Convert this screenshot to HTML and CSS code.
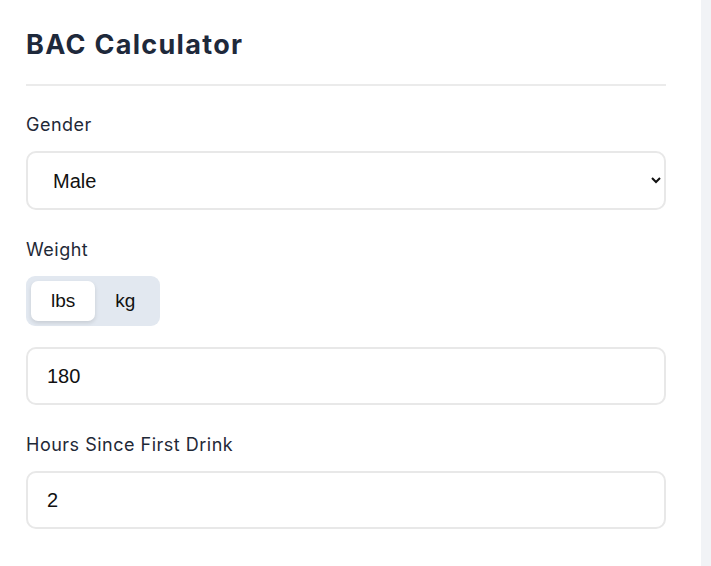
FILE: index.html
```html
<!DOCTYPE html>
<html lang="en">
<head>
    <meta charset="UTF-8">
    <meta name="viewport" content="width=device-width, initial-scale=1.0">
    <title>BAC Calculator</title>
    <link rel="stylesheet" href="styles.css">
</head>
<body>
    <div class="calc-panel">
        <h1 class="calc-title">BAC Calculator</h1>

        <div class="field">
            <label for="gender">Gender</label>
            <select id="gender" class="control select-control">
                <option>Male</option>
                <option>Female</option>
            </select>
        </div>

        <div class="field">
            <label>Weight</label>
            <div class="unit-toggle">
                <button class="unit-btn active">lbs</button>
                <button class="unit-btn">kg</button>
            </div>
            <input type="text" class="control" value="180">
        </div>

        <div class="field">
            <label for="hours">Hours Since First Drink</label>
            <input type="text" id="hours" class="control" value="2">
        </div>
    </div>
</body>
</html>
```

FILE: styles.css
```css
body {
    margin: 0;
    padding: 0;
    background: #f1f3f6;
    font-family: 'Inter', 'Liberation Sans', sans-serif;
    height: 566px;
    overflow: hidden;
}

.calc-panel {
    width: 701px;
    height: 566px;
    background: #fff;
    box-sizing: border-box;
    padding: 27px 35px 0 26px;
}

.calc-title {
    margin: 0;
    font-size: 27px;
    line-height: 36px;
    font-weight: 700;
    color: #1e293b;
    letter-spacing: 1.3px;
    padding-bottom: 21px;
    border-bottom: 2px solid #ebebeb;
    margin-bottom: 27px;
}

.field {
    margin-bottom: 28px;
}

.field label {
    display: block;
    font-size: 18px;
    line-height: 24px;
    letter-spacing: 0.5px;
    color: #1f2937;
    margin-bottom: 14px;
}

.control {
    display: block;
    width: 100%;
    box-sizing: border-box;
    height: 58px;
    padding: 0 19px;
    border: 2px solid #e8e8e8;
    border-radius: 10px;
    background: #fff;
    font-family: 'Liberation Sans', Arial, sans-serif;
    font-size: 20px;
    color: #111;
    outline: none;
}

.select-control {
    height: 59px;
    padding: 0 10px 0 21px;
}

.unit-toggle {
    display: inline-flex;
    background: #e2e8f0;
    border-radius: 9px;
    padding: 5px;
    margin-bottom: 21px;
}

.unit-btn {
    border: none;
    background: transparent;
    font-family: 'Liberation Sans', Arial, sans-serif;
    font-size: 19px;
    color: #111;
    padding: 0 20px;
    height: 40px;
    border-radius: 7px;
    cursor: pointer;
}

.unit-btn.active {
    background: #fff;
    box-shadow: 0 2px 4px rgba(0,0,0,0.12);
}
```
